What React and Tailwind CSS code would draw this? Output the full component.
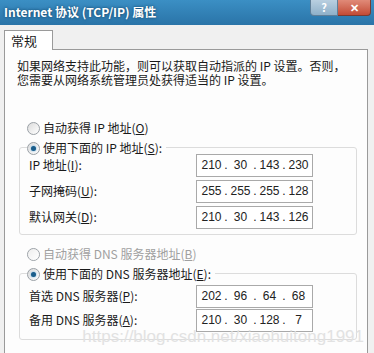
import React from "react";

const FONT = { fontFamily: '"Noto Sans CJK SC", "Liberation Sans", sans-serif' };

function Radio({ checked, disabled }) {
  return (
    <span className="relative inline-block w-[13px] h-[13px] rounded-full border border-[#9aa0a6] bg-gradient-to-br from-[#dcdcdc] to-white shrink-0">
      {checked && (
        <span className="absolute left-[3px] top-[3px] w-[5px] h-[5px] rounded-full bg-[#1b5d8a] shadow-[0_0_2px_#5aa9e0]" />
      )}
      {disabled && <span className="absolute inset-0 rounded-full bg-white/50" />}
    </span>
  );
}

function IpBox({ parts }) {
  return (
    <div className="w-[117px] h-[23px] border border-[#a9a9a9] bg-white flex items-center text-[12px] leading-none text-[#222] pl-[2px] whitespace-nowrap shrink-0" style={{ fontFamily: '"Liberation Sans", sans-serif' }}>
      <span className="w-[25px] text-center">{parts[0]}</span>
      <span className="w-[4px] text-center">.</span>
      <span className="w-[25px] text-center">{parts[1]}</span>
      <span className="w-[4px] text-center">.</span>
      <span className="w-[25px] text-center">{parts[2]}</span>
      <span className="w-[4px] text-center">.</span>
      <span className="w-[25px] text-center">{parts[3]}</span>
    </div>
  );
}

function Row({ label, parts, tall }) {
  return (
    <div className={`flex items-center ${tall ? "h-[26px]" : "h-[24px]"}`}>
      <span className="w-[176px] pl-[9px] leading-[14px] whitespace-nowrap">{label}</span>
      <IpBox parts={parts} />
    </div>
  );
}

export default function App() {
  return (
    <div className="w-[374px] h-[353px] bg-[#f0f0f0] overflow-hidden text-[12px] leading-[14px] text-[#1a1a1a]" style={FONT}>
      <div className="h-[25px] bg-gradient-to-b from-[#3b8fc4] to-[#2a74a8] flex items-start justify-between pl-[4px] pr-[3px]">
        <span className="mt-[5px] text-white font-bold text-[12px] leading-[14px] [text-shadow:0_0_3px_#0b3a5c]">Internet 协议 (TCP/IP) 属性</span>
        <div className="flex">
          <div className="w-[28px] h-[16px] rounded-bl-[4px] border border-t-0 border-[#5f7f99] bg-gradient-to-b from-[#b9cfe0] to-[#8fb0c9] flex items-center justify-center text-white font-bold text-[11px] leading-none">?</div>
          <div className="w-[33px] h-[16px] rounded-br-[4px] border border-t-0 border-l-0 border-[#7a3a30] bg-gradient-to-b from-[#e08a78] to-[#c24a35] flex items-center justify-center text-white font-bold text-[11px] leading-none">✕</div>
        </div>
      </div>
      <div className="pl-[4px] pr-[6px] pt-[4px]">
        <div className="flex">
          <div className="h-[20px] w-[49px] border border-b-0 border-[#9a9a9a] bg-white px-[6px] flex items-center text-[13px] relative top-[1px]">常规</div>
        </div>
        <div className="h-[310px] border border-[#9a9a9a] bg-[#fdfdfd] pl-[12px] pr-[10px] pt-[9px]">
          <p className="leading-[14px] text-[12px]">如果网络支持此功能，则可以获取自动指派的 IP 设置。否则，<br />您需要从网络系统管理员处获得适当的 IP 设置。</p>
          <div className="mt-[32px] pl-[10px] flex items-center gap-[3px] h-[18px]">
            <Radio />
            <span>自动获得 IP 地址(<u>O</u>)</span>
          </div>
          <div className="mt-[1px] pt-[9px] relative">
            <div className="absolute left-[10px] top-[1px] flex items-center gap-[3px] h-[18px] bg-[#fdfdfd] pr-[4px] z-10">
              <Radio checked />
              <span>使用下面的 IP 地址(<u>S</u>):</span>
            </div>
            <div className="ml-[2px] w-[338px] h-[88px] border border-[#dcdcdc] rounded-[3px] pt-[4px]">
              <Row tall label={<>IP 地址(<u>I</u>):</>} parts={["210", "30", "143", "230"]} />
              <Row tall label={<>子网掩码(<u>U</u>):</>} parts={["255", "255", "255", "128"]} />
              <Row tall label={<>默认网关(<u>D</u>):</>} parts={["210", "30", "143", "126"]} />
            </div>
          </div>
          <div className="mt-[10px] pl-[10px] flex items-center gap-[3px] h-[18px] text-[#a0a0a0]">
            <Radio disabled />
            <span>自动获得 DNS 服务器地址(<u>B</u>)</span>
          </div>
          <div className="mt-[1px] pt-[9px] relative">
            <div className="absolute left-[10px] top-[1px] flex items-center gap-[3px] h-[18px] bg-[#fdfdfd] pr-[4px] z-10">
              <Radio checked />
              <span>使用下面的 DNS 服务器地址(<u>E</u>):</span>
            </div>
            <div className="ml-[2px] w-[338px] h-[67px] border border-[#dcdcdc] rounded-[3px] pt-[10px] relative">
              <Row label={<>首选 DNS 服务器(<u>P</u>):</>} parts={["202", "96", "64", "68"]} />
              <Row label={<>备用 DNS 服务器(<u>A</u>):</>} parts={["210", "30", "128", "7"]} />
              <span className="absolute right-[-8px] bottom-[-8px] text-[17px] leading-[20px] text-[#e2e2e2] whitespace-nowrap" style={{ fontFamily: '"Liberation Sans", sans-serif' }}>https://blog.csdn.net/xiaohuitong1991</span>
            </div>
          </div>
        </div>
      </div>
    </div>
  );
}
